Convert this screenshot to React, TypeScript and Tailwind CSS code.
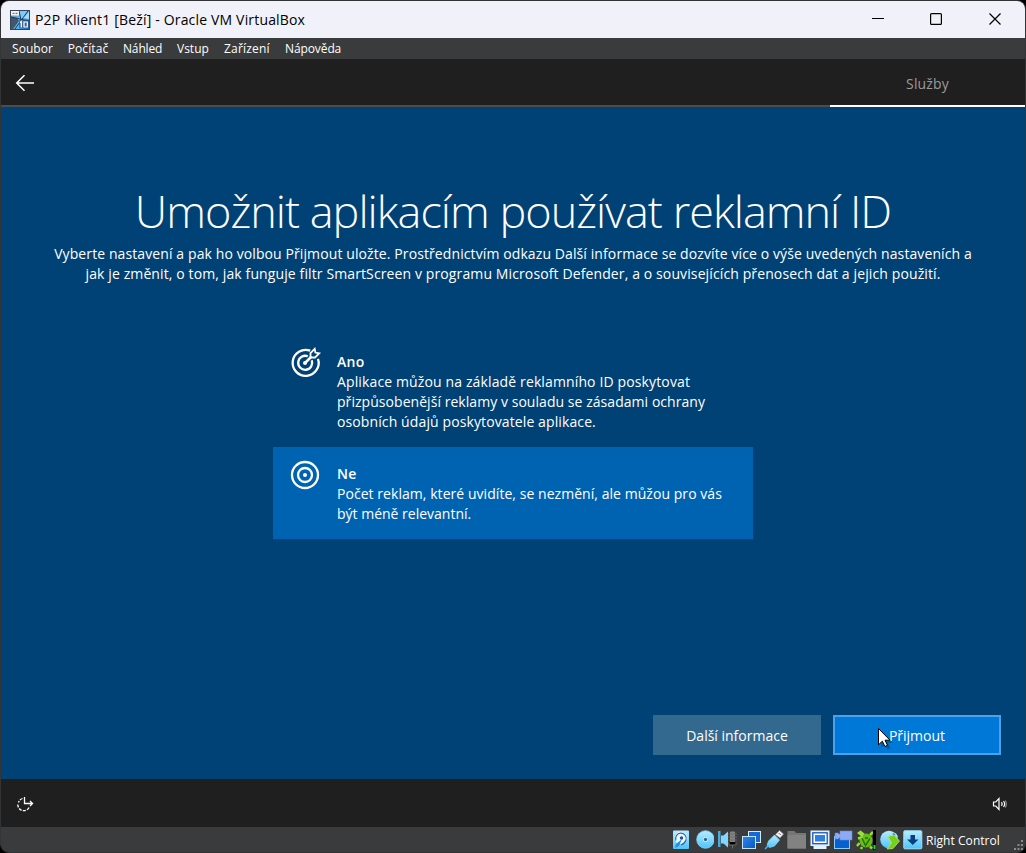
import type { ReactNode } from 'react';

const menu = [
  { label: 'Soubor', cls: 'w-[55.7px] tracking-[0.05px]' },
  { label: 'Počítač', cls: 'w-[55.3px] tracking-[0.1px]' },
  { label: 'Náhled', cls: 'w-[54px] tracking-[-0.15px]' },
  { label: 'Vstup', cls: 'w-[47px]' },
  { label: 'Zařízení', cls: 'w-[61px] tracking-[0.2px]' },
  { label: 'Nápověda', cls: 'w-[60px] tracking-[-0.1px]' },
];

function AppIcon() {
  return (
    <svg width="20" height="20" viewBox="0 0 20 20">
      <defs>
        <linearGradient id="app" x1="0" y1="0" x2="1" y2="1">
          <stop offset="0" stopColor="#5d7f99" />
          <stop offset="0.45" stopColor="#6cbdf0" />
          <stop offset="1" stopColor="#1b5fae" />
        </linearGradient>
      </defs>
      <rect width="20" height="20" fill="#36465a" />
      <rect x="1" y="1" width="18" height="18" fill="url(#app)" />
      <path d="M1 7l6 1 2 3-6 8H1z" fill="#43566a" />
      <path d="M10 1h7l-5 8-2-1z" fill="#7ccbf7" />
      <path d="M9 11l3-2-3 10H4z" fill="#58b4f0" />
      <path d="M18 1 5 19M1 7l18 4M9 1l2 9" stroke="#1c3a5c" strokeWidth="1" />
      <path d="M13.500 8l5.500-6v7z" fill="#a5dcfa" />
      <rect x="1" y="1" width="8" height="4.500" fill="#f5f5f5" />
      <path d="M2.500 3.300h2M5.500 3.300h2" stroke="#555" />
      <rect x="9" y="10" width="10" height="8" fill="#31517a" opacity=".6" />
      <path d="M10 12.500l1.300-1v6M14 12h3.300v5H14z" stroke="#fff" strokeWidth="1.200" fill="none" />
    </svg>
  );
}

function StatusIcon({ children }: { children: ReactNode }) {
  return (
    <span className="w-[23.2px]">
      <svg width="20" height="20" viewBox="0 0 20 20">{children}</svg>
    </span>
  );
}

function StatusIcons() {
  return (
    <div className="flex h-5">
      <StatusIcon>
        <defs>
          <linearGradient id="sky" x1="0" y1="0" x2="0" y2="1">
            <stop offset="0" stopColor="#b8ecff" />
            <stop offset="1" stopColor="#4cc4fa" />
          </linearGradient>
          <linearGradient id="deep" x1="0" y1="0" x2="1" y2="1">
            <stop offset="0" stopColor="#2f86e8" />
            <stop offset="1" stopColor="#0757c4" />
          </linearGradient>
        </defs>
        <rect x="2" y="0.500" width="16" height="18.500" rx="1" fill="url(#sky)" />
        <circle cx="10" cy="8" r="6.300" fill="#eefaff" />
        <path d="M5 10.500A5.300 5.300 0 1 1 15 10c-.7 2.500-2.500 4-5 5" fill="none" stroke="#2a6cb8" strokeWidth="1.200" />
        <circle cx="10.500" cy="8" r="1.700" fill="#1553a8" />
        <path d="M11 9l-3 7-4 2 1-4z" fill="#2c8be0" />
      </StatusIcon>
      <StatusIcon>
        <circle cx="11.500" cy="9.500" r="8.800" fill="url(#sky)" stroke="#7fd6ff" strokeWidth=".8" />
        <circle cx="11.500" cy="9.500" r="2.200" fill="#2a6491" stroke="#e3f7ff" />
      </StatusIcon>
      <StatusIcon>
        <rect x="13" y="1.500" width="5" height="12" rx="1" fill="#858585" />
        <path d="M11 4h9M11 7h9M11 10h9M12 12v3h7v-3M15.500 15v3.500" stroke="#6a6a6a" />
        <path d="M1 1h2.500v16H1z" fill="#4aa9dd" />
        <path d="M4 5.500h2.500L11 1.500v16l-4.500-4H4z" fill="#82d5ff" />
      </StatusIcon>
      <StatusIcon>
        <rect x="7.500" y="1.500" width="12" height="11" fill="#1469d5" stroke="#d4ebfc" />
        <rect x="1.500" y="6.500" width="13" height="12" fill="url(#deep)" stroke="#c2e3fb" />
      </StatusIcon>
      <StatusIcon>
        <path d="M11.500 4.500l4-4 4 3.500-3.500 4z" fill="#f4f4f4" stroke="#8c8c8c" strokeWidth=".7" />
        <path d="M14.800 3.200l.8.8M16.800 5l-.8-.8" stroke="#444" />
        <path d="M10.500 5l5 5-5 6-5 1.500-2.500-2L4.500 11z" fill="url(#sky)" stroke="#8bdcff" strokeWidth=".7" />
        <path d="M1 19l3.500-3.500" stroke="#4db4ee" strokeWidth="1.500" />
      </StatusIcon>
      <StatusIcon>
        <path d="M.5 1h7l1.500 2h10v15.500H.5z" fill="#767676" />
        <path d="M.5 5h18.500v13.500H.5z" fill="#828282" />
      </StatusIcon>
      <StatusIcon>
        <path d="M.5.500h19v15.500h-3v3h-13v-3h-3z" fill="#dff1fe" />
        <rect x="2.800" y="2.800" width="14.400" height="10.900" fill="#fff" stroke="#1155bf" strokeWidth="1.300" />
        <rect x="5" y="5" width="10" height="6.500" fill="#2e7fe0" />
      </StatusIcon>
      <StatusIcon>
        <rect x="1.500" y="6.500" width="15" height="12" fill="#0760cf" stroke="#8acbf8" />
        <path d="M2 3h3l2 1.500V1h12v9H7V7.500L5 9H2z" fill="#8daaf5" stroke="#6d87dc" strokeWidth=".6" />
      </StatusIcon>
      <StatusIcon>
        <ellipse cx="10" cy="10.500" rx="6.500" ry="7" fill="#67bd16" />
        <path d="M7 7l-5 1.500M14 5l3-3M3.500 13l-2.500 3M6 17l-1 2M14 16.500l2 2" stroke="#8fe02c" strokeWidth="2.500" />
        <path d="M1 3l3.500-2.500 4 3-2.500 3.500z" fill="#9be03c" />
        <path d="M6 8l3.500 7.500L14 8.500M9 8h3" stroke="#26700a" strokeWidth="1.400" fill="none" />
        <rect x="17" y="0" width="3" height="20" fill="#000" />
        <rect x="17.500" y="15" width="2" height="4" fill="#00ef20" />
      </StatusIcon>
      <StatusIcon>
        <circle cx="9" cy="9.500" r="8.800" fill="url(#sky)" />
        <path d="M13 2.500a6 6 0 0 1 5 5l-3-1z" fill="#9be3ff" />
        <path d="M13 3.500l2 2" stroke="#35708f" strokeWidth="1.500" />
        <path d="M8 6.500l6-1.500 5.500 6L13 18.500 7 19l4.500-6z" fill="#77cf1c" stroke="#b2e86a" strokeWidth=".8" />
      </StatusIcon>
      <StatusIcon>
        <rect x=".8" y=".8" width="18" height="18" rx="1" fill="url(#sky)" stroke="#9be1ff" />
        <path d="M7.500 5h4.500v4.500h3.500l-5.700 5.500-5.800-5.500h3.500z" fill="#0b3f7c" />
      </StatusIcon>
    </div>
  );
}

function TargetArrow() {
  return (
    <svg width="32" height="32" viewBox="0 0 32 32" fill="none" stroke="#fff" strokeWidth="2.300">
      <path d="M20.200 4.700A13 13 0 1 0 28 12.800" />
      <path d="M17.800 10.300A7 7 0 1 0 21.700 14.200" />
      <circle cx="15" cy="17" r="2" fill="#fff" stroke="none" />
      <path d="M15 17l6.500-6.500" strokeWidth="2.500" />
      <path d="M20.500 11.500V7L24.700 2.800l.7 3.800 3.800.7L25 11.500z" strokeWidth="1.800" />
    </svg>
  );
}

function Target() {
  return (
    <svg width="32" height="32" viewBox="0 0 32 32" fill="none" stroke="#fff" strokeWidth="2.300">
      <circle cx="15" cy="16" r="13" />
      <circle cx="15" cy="16" r="7" />
      <circle cx="15" cy="16" r="2" fill="#fff" stroke="none" />
    </svg>
  );
}

export default function App() {
  return (
    <div className="h-[853px] w-[1026px] overflow-hidden bg-black font-['Open_Sans','Noto_Sans',sans-serif]">
      <div className="flex h-full flex-col overflow-hidden rounded-[9px] border border-[#333435] bg-[#1f1f1f]">
        <header className="flex h-[37px] shrink-0 items-center bg-[#f1f2f9] pl-[9px] text-black">
          <AppIcon />
          <h1 className="ml-[5px] flex-1 whitespace-nowrap text-[14px] tracking-[0.17px]">
            P2P Klient1 [Beží] - Oracle VM VirtualBox
          </h1>
          <svg width="153" height="37" viewBox="0 0 153 37" fill="none" stroke="#000" strokeWidth="1.200">
            <path d="M0 17.500h12" />
            <rect x="58.600" y="12.600" width="10.800" height="10.800" rx="1" />
            <path d="M117.500 12.500l11 11M128.500 12.500l-11 11" />
          </svg>
        </header>
        <nav className="flex h-[21px] shrink-0 items-center bg-[#3a3b3d] pl-[11px] text-[12px] leading-[20px] text-white">
          {menu.map((m) => (
            <span key={m.label} className={m.cls}>{m.label}</span>
          ))}
        </nav>
        <div className="flex h-[48px] shrink-0 justify-between bg-[#1f1f1f]">
          <div className="flex flex-1 border-b-2 border-[#4c4c4c] pl-[14px]">
            <svg className="mt-[15px]" width="20" height="18" viewBox="0 0 20 18" fill="none" stroke="#fff" strokeWidth="1.500">
              <path d="M9.500 1.200 1.700 9l7.800 7.800M1.700 9H19" />
            </svg>
          </div>
          <div className="w-[195px] border-b-2 border-white pt-[15px] text-center text-[14px] leading-[20px] tracking-[0.15px] text-[#9b9b9b]">
            Služby
          </div>
        </div>
        <main className="flex h-[672px] shrink-0 flex-col items-center bg-[#004275] text-[14px] leading-[20px] text-white">
          <h2 className="mt-[73px] h-[64px] whitespace-nowrap text-[45px] leading-[62px] font-light tracking-[-0.98px]">
            Umožnit aplikacím používat reklamní ID
          </h2>
          <p className="flex flex-col items-center whitespace-nowrap">
            <span className="tracking-[0.1px]">
              Vyberte nastavení a pak ho volbou Přijmout uložte. Prostřednictvím odkazu Další informace se dozvíte více o výše uvedených nastaveních a
            </span>
            <span className="tracking-[0.115px]">
              jak je změnit, o tom, jak funguje filtr SmartScreen v programu Microsoft Defender, a o souvisejících přenosech dat a jejich použití.
            </span>
          </p>
          <div className="mt-[51px] flex w-[480px] flex-col whitespace-nowrap">
            <div className="flex h-[112px] pl-[17px]">
              <div className="w-[47px] pt-[11px]"><TargetArrow /></div>
              <div className="flex flex-col pt-[17px]">
                <strong className="font-semibold tracking-[0.3px]">Ano</strong>
                <span className="tracking-[0.13px]">Aplikace můžou na základě reklamního ID poskytovat</span>
                <span className="tracking-[0.05px]">přizpůsobenější reklamy v souladu se zásadami ochrany</span>
                <span className="tracking-[0.11px]">osobních údajů poskytovatele aplikace.</span>
              </div>
            </div>
            <div className="flex h-[92px] bg-[#0063b1] pl-[17px]">
              <div className="w-[47px] pt-[12px]"><Target /></div>
              <div className="flex flex-col pt-[17px]">
                <strong className="font-semibold tracking-[0.3px]">Ne</strong>
                <span className="tracking-[0.05px]">Počet reklam, které uvidíte, se nezmění, ale můžou pro vás</span>
                <span>být méně relevantní.</span>
              </div>
            </div>
          </div>
          <div className="mt-auto mb-[24px] flex gap-3 self-end pr-[24px]">
            <button className="h-10 w-[168px] bg-[#33688f] pt-[2px]">Další informace</button>
            <button className="relative h-10 w-[168px] border-2 border-[#4da1e8] bg-[#0078d7] pt-[2px]">
              Přijmout
              <svg className="absolute top-[10px] left-[42px]" width="16" height="24" viewBox="0 0 16 24">
                <path d="M4 4v17l4-3.500 2.500 5 3-1.500-2.500-5h5z" fill="#000" opacity=".22" />
                <path d="M1.500 1.500v16.300l3.800-3.600 2.600 5.300 2.600-1.200-2.500-5.100h5z" fill="#fff" stroke="#000" />
              </svg>
            </button>
          </div>
        </main>
        <div className="flex h-[48px] shrink-0 items-center justify-between bg-[#1f1f1f] pt-[2px] pr-[17px] pl-[15px]">
          <svg width="18" height="18" viewBox="0 0 18 18" fill="none" stroke="#fff" strokeWidth="1.300">
            <path d="M6.500 3.500A6 6 0 0 0 2.500 7.500M1.800 9.500A6 6 0 0 0 13.500 11.500" strokeDasharray="3 1.200" />
            <path d="M8.500 2v6.500H16.500M14 6l2.500 2.500L14 11" />
          </svg>
          <svg width="16" height="16" viewBox="0 0 16 16" fill="none" stroke="#fff" strokeWidth="1.200">
            <path d="M1.500 6h2.300l3.200-3.500v11L3.800 10H1.500z" />
            <path d="M9.500 6.200a3 3 0 0 1 0 3.600M11.500 5a5 5 0 0 1 0 6" />
            <path d="M13.300 4.500a7 7 0 0 1 0 7" opacity=".5" />
          </svg>
        </div>
        <footer className="flex min-h-0 flex-1 justify-end bg-[#3a3b3d] pt-[3px] text-[12px] text-white">
          <StatusIcons />
          <span className="w-[87px] whitespace-nowrap leading-[22px] tracking-[0.05px]">Right Control</span>
          <svg className="mt-[9px]" width="12" height="14" viewBox="0 0 12 14" fill="#8b8b8b">
            <path d="M8 1h2v2H8zM4.500 5h2v2h-2zM8 5h2v2H8zM1 9h2v2H1zM4.500 9h2v2h-2zM8 9h2v2H8z" />
          </svg>
        </footer>
      </div>
    </div>
  );
}
